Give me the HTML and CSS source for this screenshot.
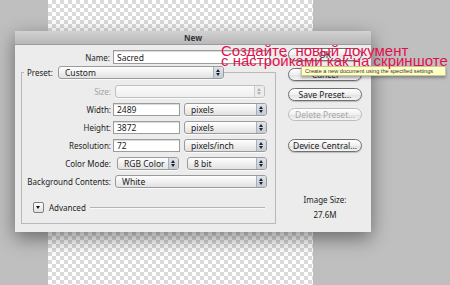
FILE: index.html
```html
<!DOCTYPE html>
<html lang="ru">
<head>
  <meta charset="UTF-8" />
  <meta name="viewport" content="width=device-width, initial-scale=1.0" />
  <title>New</title>
  <link rel="stylesheet" href="styles.css">
</head>
<body>
  <div class="desktop">
    <div class="canvas"></div>

    <div class="dialog">
      <div class="titlebar">New</div>
      <div class="dialog-body">
        <div class="main">
          <div class="name-row">
            <span class="lbl">Name:</span>
            <div class="field name-field">Sacred</div>
          </div>

          <div class="group">
            <div class="group-head">
              <span class="legend">Preset:</span>
              <div class="popup preset">Custom<span class="stepper"></span></div>
            </div>

            <div class="grid">
              <span class="lbl off">Size:</span>
              <div class="cell"><div class="popup off size"><span class="stepper"></span></div></div>

              <span class="lbl">Width:</span>
              <div class="cell">
                <div class="field num">2489</div>
                <div class="popup unit">pixels<span class="stepper"></span></div>
              </div>

              <span class="lbl">Height:</span>
              <div class="cell">
                <div class="field num">3872</div>
                <div class="popup unit">pixels<span class="stepper"></span></div>
              </div>

              <span class="lbl">Resolution:</span>
              <div class="cell">
                <div class="field num">72</div>
                <div class="popup unit">pixels/inch<span class="stepper"></span></div>
              </div>

              <span class="lbl">Color Mode:</span>
              <div class="cell">
                <div class="popup mode">RGB Color<span class="stepper"></span></div>
                <div class="popup depth">8 bit<span class="stepper"></span></div>
              </div>

              <span class="lbl">Background Contents:</span>
              <div class="cell"><div class="popup bg">White<span class="stepper"></span></div></div>
            </div>

            <div class="advanced">
              <span class="disclosure"></span>
              <span>Advanced</span>
              <span class="rule"></span>
            </div>
          </div>
        </div>

        <div class="side">
          <div class="btn">OK</div>
          <div class="btn">Cancel</div>
          <div class="btn">Save Preset...</div>
          <div class="btn off">Delete Preset...</div>
          <div class="btn device">Device Central...</div>
          <div class="image-size">
            <div>Image Size:</div>
            <div class="size-value">27.6M</div>
          </div>
        </div>
      </div>
    </div>

    <div class="tooltip">Create a new document using the specified settings</div>
    <div class="note">
      <div>Создайте&nbsp; новый документ</div>
      <div>с настройками как на скриншоте</div>
    </div>
  </div>
</body>
</html>
```

FILE: styles.css
```css
body {
  margin: 0;
  font-family: 'Noto Sans', 'Liberation Sans', sans-serif;
  font-size: 8px;
  color: #1c1c1c;
}

.desktop {
  position: relative;
  width: 450px;
  height: 285px;
  overflow: hidden;
  background: #bfbfbf;
}

.canvas {
  position: absolute;
  left: 48px;
  top: 0;
  width: 265px;
  height: 285px;
  background: repeating-conic-gradient(#dadada 0 25%, #ffffff 0 50%) 0 0 / 8px 8px;
}

.dialog {
  position: absolute;
  left: 15px;
  top: 31px;
  width: 356px;
  height: 201px;
  background: #ececec;
  box-shadow: 0 6px 18px rgba(0, 0, 0, 0.45);
  display: flex;
  flex-direction: column;
}

.titlebar {
  height: 14px;
  line-height: 14px;
  text-align: center;
  font-weight: bold;
  color: #333;
  background: linear-gradient(#d2d2d2, #b8b8b8);
  border-bottom: 1px solid #9a9a9a;
  box-sizing: border-box;
}

.dialog-body {
  display: flex;
  flex: 1;
}

.main {
  width: 261px;
  padding: 5px 0 0 6px;
  box-sizing: border-box;
}

.name-row {
  display: flex;
  align-items: center;
  height: 14px;
}

.name-row .lbl {
  width: 89px;
  text-align: right;
  margin-right: 3px;
}

.field {
  height: 14px;
  line-height: 13px;
  box-sizing: border-box;
  background: #fff;
  border: 1px solid #9c9c9c;
  box-shadow: inset 0 1px 1px rgba(0, 0, 0, 0.15);
  padding-left: 3px;
  font-size: 8.5px;
}

.name-field {
  width: 157px;
}

.group {
  margin-top: 8px;
  width: 255px;
  height: 152px;
  box-sizing: border-box;
  border: 1px solid #b9b9b9;
}

.group-head {
  display: flex;
  align-items: center;
  margin-top: -7px;
  padding-left: 2px;
  height: 13px;
}

.legend {
  width: 34px;
  box-sizing: border-box;
  padding-left: 3px;
  background: #ececec;
}

.popup {
  position: relative;
  height: 13px;
  line-height: 12px;
  box-sizing: border-box;
  padding-left: 6px;
  border: 1px solid #9a9a9a;
  border-radius: 3px;
  background: linear-gradient(#ffffff, #ededed 60%, #e2e2e2);
  box-shadow: 0 1px 0 rgba(255, 255, 255, 0.8);
  font-size: 8.5px;
}

.stepper {
  position: absolute;
  right: 0;
  top: 0;
  width: 9px;
  height: 11px;
  border-radius: 0 2px 2px 0;
  background: linear-gradient(#dde3ec, #c3ccd8);
  border-left: 1px solid #a8b0bc;
}

.stepper::before,
.stepper::after {
  content: "";
  position: absolute;
  left: 2px;
  border-left: 2.5px solid transparent;
  border-right: 2.5px solid transparent;
}

.stepper::before {
  top: 2px;
  border-bottom: 3px solid #222;
}

.stepper::after {
  bottom: 2px;
  border-top: 3px solid #222;
}

.preset {
  width: 166px;
}

.grid {
  display: grid;
  grid-template-columns: 89px 1fr;
  column-gap: 2px;
  row-gap: 5px;
  margin-top: 6px;
}

.grid .lbl {
  text-align: right;
  line-height: 13px;
  white-space: nowrap;
}

.lbl.off {
  color: #a3a3a3;
}

.cell {
  display: flex;
  align-items: center;
  height: 13px;
}

.cell .field {
  height: 13px;
  line-height: 12px;
}

.num {
  width: 67px;
}

.unit {
  width: 83px;
  margin-left: 4px;
}

.size {
  width: 150px;
  margin-left: 2px;
}

.popup.off {
  border-color: #c0c0c0;
  background: linear-gradient(#fafafa, #efefef);
}

.popup.off .stepper {
  background: #ececec;
  border-left-color: #d0d0d0;
}

.popup.off .stepper::before {
  border-bottom-color: #b0b0b0;
}

.popup.off .stepper::after {
  border-top-color: #b0b0b0;
}

.mode {
  width: 62px;
  margin-left: 4px;
}

.depth {
  width: 80px;
  margin-left: 8px;
}

.bg {
  width: 152px;
  margin-left: 2px;
}

.advanced {
  display: flex;
  align-items: center;
  margin: 14px 0 0 11px;
  height: 11px;
}

.disclosure {
  position: relative;
  width: 11px;
  height: 11px;
  box-sizing: border-box;
  border: 1px solid #7d7d7d;
  border-radius: 2px;
  background: linear-gradient(#ffffff, #e0e0e0);
  margin-right: 5px;
}

.disclosure::after {
  content: "";
  position: absolute;
  left: 2px;
  top: 3px;
  border-left: 2.5px solid transparent;
  border-right: 2.5px solid transparent;
  border-top: 3.5px solid #111;
}

.rule {
  width: 175px;
  height: 0;
  margin-left: 4px;
  border-top: 1px solid #b4b4b4;
  border-bottom: 1px solid #fafafa;
}

.side {
  flex: 1;
  padding: 3px 0 0 12px;
  display: flex;
  flex-direction: column;
}

.btn {
  width: 74px;
  height: 13px;
  line-height: 11px;
  box-sizing: border-box;
  text-align: center;
  font-size: 8.5px;
  border: 1px solid #6f6f6f;
  border-radius: 7px;
  background: linear-gradient(#ffffff, #f0f0f0 50%, #e0e0e0 51%, #f4f4f4);
  box-shadow: 0 1px 1px rgba(0, 0, 0, 0.2);
  margin-bottom: 7px;
}

.btn.off {
  color: #a8a8a8;
  border-color: #bcbcbc;
  box-shadow: none;
}

.btn.device {
  margin-top: 11px;
}

.image-size {
  margin-top: 33px;
  width: 74px;
  text-align: center;
  line-height: 15px;
}

.tooltip {
  position: absolute;
  left: 301px;
  top: 66px;
  width: 145px;
  height: 10px;
  line-height: 9px;
  box-sizing: border-box;
  padding-left: 3px;
  font-family: 'Liberation Sans', Arial, sans-serif;
  font-size: 5.6px;
  color: #333;
  background: #ffffc6;
  border: 1px solid #c8c8a0;
  box-shadow: 0 2px 3px rgba(0, 0, 0, 0.3);
  white-space: nowrap;
}

.note {
  position: absolute;
  left: 221px;
  top: 46px;
  font-family: 'Liberation Sans', Arial, sans-serif;
  font-size: 15px;
  line-height: 10px;
  color: #e0124c;
  white-space: nowrap;
}
```
